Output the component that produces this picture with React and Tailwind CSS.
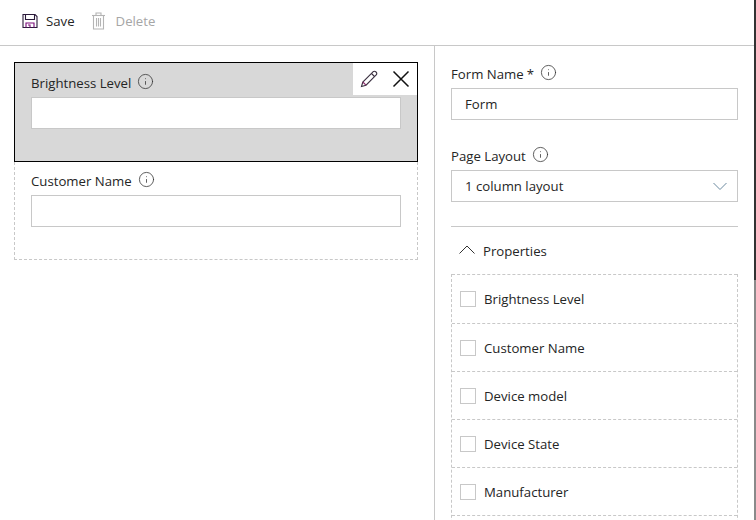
import { Info } from 'lucide-react'

const fields = ['Brightness Level', 'Customer Name', 'Device model', 'Device State', 'Manufacturer']

function SaveIcon() {
  return (
    <svg width="16" height="16" viewBox="0 0 16 16" fill="none" stroke="#2a1a3a" strokeWidth="1.1">
      <path d="M1 1.5 H13 L15 3.5 V14.5 H1 Z" />
      <path d="M3.5 1.5 V6.5 H12.5 V1.5" />
      <path d="M4 14.5 V10 H12 V14.5" stroke="#7a0a7a" />
      <path d="M6 12 H8 V14.5" stroke="#7a0a7a" />
    </svg>
  )
}

function TrashIcon() {
  return (
    <svg width="15" height="18" viewBox="0 0 15 18" fill="none" stroke="#b4b4b4" strokeWidth="1.1">
      <path d="M1 3.5 H14" />
      <path d="M5 3.5 V1 H10 V3.5" />
      <path d="M2.5 3.5 V17 H12.5 V3.5" />
      <path d="M5.5 6 V14.5 M7.5 6 V14.5 M9.5 6 V14.5" />
    </svg>
  )
}

function PencilIcon() {
  return (
    <svg width="18" height="18" viewBox="0 0 18 18" fill="none" stroke="#3a3040" strokeWidth="1.1">
      <path d="M1.5 16.5 L2.8 12 L13 1.8 C14 1 15 1 16 2 C17 3 17 4 16.2 5 L6 15.2 Z" />
      <path d="M11.5 3.5 L14.5 6.5" />
      <path d="M2.8 12 L6 15.2" stroke="#8a2a6a" />
    </svg>
  )
}

function CloseIcon() {
  return (
    <svg width="18" height="18" viewBox="0 0 18 18" fill="none" stroke="#111111" strokeWidth="1.5">
      <path d="M1.5 1.5 L16.5 16.5 M16.5 1.5 L1.5 16.5" />
    </svg>
  )
}

function Chevron({ up, color }) {
  return (
    <svg width="16" height="9" viewBox="0 0 16 9" fill="none" stroke={color} strokeWidth="1">
      <path d={up ? 'M0.5 8.5 L8 1 L15.5 8.5' : 'M1.5 1 L8 7.5 L14.5 1'} />
    </svg>
  )
}

function FieldLabel({ children, mark }) {
  return (
    <div className="flex h-[20px] items-center text-[13.2px] leading-[18px] text-[#252525]">
      <span>
        {children}
        {mark && <span className="ml-[3px]">*</span>}
      </span>
      <Info size={17} strokeWidth={1.1} className="-mt-[3px] ml-[6px] text-[#333333]" />
    </div>
  )
}

function TextBox({ value }) {
  return (
    <div className="flex h-[32px] items-center border border-[#c8c8c8] bg-white px-[13px] pt-[2px] text-[13.2px] text-[#252525]">
      {value}
    </div>
  )
}

export default function App() {
  return (
    <div className="flex h-[520px] w-[756px] overflow-hidden bg-white font-['Open_Sans',sans-serif] text-[#252525]">
      <div className="flex min-w-0 flex-1 flex-col">
        <header className="flex h-[46px] shrink-0 items-center border-b border-[#c8c8c8] pb-[3px] pl-[22px] text-[13.2px]">
          <button className="flex items-center gap-[8px]">
            <SaveIcon />
            <span className="pt-[2px]">Save</span>
          </button>
          <button className="ml-[16px] flex items-center gap-[10px] text-[#a6a6a6]">
            <TrashIcon />
            <span className="pt-[2px]">Delete</span>
          </button>
        </header>

        <div className="flex min-h-0 flex-1">
          <main className="w-[435px] shrink-0 border-r border-[#c8c8c8] pl-[14px] pr-[16px] pt-[16px]">
            <div className="border-x border-b border-dashed border-[#c8c8c8]">
              <div className="relative -mx-px h-[100px] border border-black bg-[#d8d8d8] px-[16px] pt-[10px]">
                <FieldLabel>Brightness Level</FieldLabel>
                <div className="mt-[4px]">
                  <TextBox />
                </div>
                <div className="absolute right-0 top-0 flex h-[32px] w-[64px] items-center justify-end gap-[14px] bg-white pr-[7px]">
                  <PencilIcon />
                  <CloseIcon />
                </div>
              </div>
              <div className="h-[97px] px-[16px] pt-[9px]">
                <FieldLabel>Customer Name</FieldLabel>
                <div className="mt-[4px]">
                  <TextBox />
                </div>
              </div>
            </div>
          </main>

          <aside className="min-w-0 flex-1 px-[16px] pt-[18px]">
            <FieldLabel mark>Form Name</FieldLabel>
            <div className="mt-[4px]">
              <TextBox value="Form" />
            </div>
            <div className="mt-[26px]">
              <FieldLabel>Page Layout</FieldLabel>
            </div>
            <div className="relative mt-[4px]">
              <TextBox value="1 column layout" />
              <div className="absolute right-[10px] top-[12px]">
                <Chevron color="#6b8aa0" />
              </div>
            </div>
            <div className="mt-[24px] border-t border-[#c8c8c8]" />
            <div className="flex h-[47px] items-center pl-[8px] text-[13.2px]">
              <span className="mr-[8px] -mt-[2px]">
                <Chevron up color="#333333" />
              </span>
              <span className="pt-[2px]">Properties</span>
            </div>
            <div className="border-x border-dashed border-[#c8c8c8]">
              {fields.map((name, i) => (
                <label
                  key={name}
                  className={`flex items-center border-t border-dashed border-[#c8c8c8] pl-[8px] text-[13.2px] ${i === 0 ? 'h-[49px]' : 'h-[48px]'}`}
                >
                  <span className="h-[16px] w-[16px] border border-[#c8c8c8] bg-white" />
                  <span className="ml-[8px] pt-[2px]">{name}</span>
                </label>
              ))}
              <div className="h-[48px] border-t border-dashed border-[#c8c8c8]" />
            </div>
          </aside>
        </div>
      </div>
      <div className="flex w-[2px] shrink-0 flex-col bg-[#8a8a8a]">
        <div className="h-[280px] bg-[#333333]" />
      </div>
    </div>
  )
}
